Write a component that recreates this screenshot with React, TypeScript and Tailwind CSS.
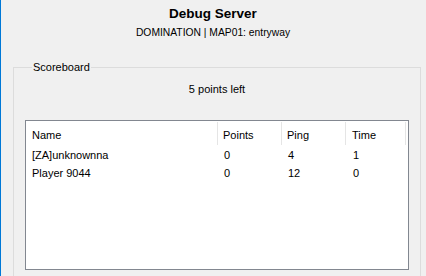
import React from "react";

const players = [
  { name: "[ZA]unknownna", points: 0, ping: 4, time: 1 },
  { name: "Player 9044", points: 0, ping: 12, time: 0 },
];

const App: React.FC = () => {
  return (
    <div className="w-[426px] h-[276px] overflow-hidden bg-[#f0f0f0] border-l border-[#0078d7] text-black font-['Liberation_Sans',Arial,sans-serif]">
      {/* Header */}
      <div className="flex flex-col items-center pt-[5px] pr-[1px]">
        <h1 className="text-[13.5px] font-bold leading-[18px]">Debug Server</h1>
        <p className="text-[10.3px] leading-[14px] mt-[3px]">DOMINATION | MAP01: entryway</p>
      </div>

      {/* Scoreboard group */}
      <fieldset className="ml-[12px] mt-[21px] w-[408px] h-[260px] border border-[#dcdcdc] px-[11px] pb-2">
        <legend className="ml-[7px] px-[1px] text-[11px] leading-[13px]">Scoreboard</legend>
        <p className="text-center text-[11px] leading-[14px] mt-[8px]">5 points left</p>

        <div className="mt-[24px] w-[384px] h-[150px] border border-[#828790] bg-white">
          <div className="flex h-[25px] text-[11px]">
            <div className="w-[192px] mt-[1px] h-[23px] flex items-center pt-[4px] pl-[6px] border-r border-[#e5e5e5]">Name</div>
            <div className="w-[64px] mt-[1px] h-[23px] flex items-center pt-[4px] pl-[5px] border-r border-[#e5e5e5]">Points</div>
            <div className="w-[64px] mt-[1px] h-[23px] flex items-center pt-[4px] pl-[5px] border-r border-[#e5e5e5]">Ping</div>
            <div className="w-[60px] mt-[1px] h-[23px] flex items-center pt-[4px] pl-[6px] border-r border-[#e5e5e5]">Time</div>
          </div>
          {players.map((p) => (
            <div key={p.name} className="flex h-[18px] items-center pt-[1px] text-[11px]">
              <div className="w-[192px] pl-[6px]">{p.name}</div>
              <div className="w-[64px] pl-[6px]">{p.points}</div>
              <div className="w-[64px] pl-[6px]">{p.ping}</div>
              <div className="w-[60px] pl-[7px]">{p.time}</div>
            </div>
          ))}
        </div>
      </fieldset>
    </div>
  );
};

export default App;
